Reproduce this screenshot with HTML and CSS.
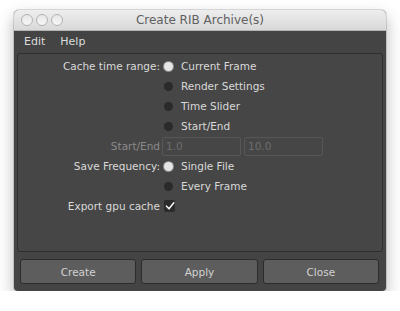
FILE: index.html
```html
<!DOCTYPE html>
<html lang="en">
<head>
  <meta charset="UTF-8" />
  <title>Create RIB Archive(s)</title>
  <link rel="stylesheet" href="styles.css">
</head>
<body>
  <div class="window">
    <div class="titlebar">
      <div class="lights">
        <span class="light"></span>
        <span class="light"></span>
        <span class="light"></span>
      </div>
      <div class="title">Create RIB Archive(s)</div>
    </div>

    <div class="menubar">
      <span class="menu-item">Edit</span>
      <span class="menu-item">Help</span>
    </div>

    <div class="panel">
      <div class="row">
        <span class="label">Cache time range:</span>
        <label class="radio"><span class="dot on"></span>Current Frame</label>
      </div>
      <div class="row">
        <span class="label"></span>
        <label class="radio"><span class="dot"></span>Render Settings</label>
      </div>
      <div class="row">
        <span class="label"></span>
        <label class="radio"><span class="dot"></span>Time Slider</label>
      </div>
      <div class="row">
        <span class="label"></span>
        <label class="radio"><span class="dot"></span>Start/End</label>
      </div>
      <div class="row">
        <span class="label disabled">Start/End</span>
        <div class="fields">
          <input class="field" type="text" value="1.0" disabled />
          <input class="field" type="text" value="10.0" disabled />
        </div>
      </div>
      <div class="row">
        <span class="label">Save Frequency:</span>
        <label class="radio"><span class="dot on"></span>Single File</label>
      </div>
      <div class="row">
        <span class="label"></span>
        <label class="radio"><span class="dot"></span>Every Frame</label>
      </div>
      <div class="row">
        <span class="label">Export gpu cache</span>
        <span class="checkbox">
          <svg width="10" height="10" viewBox="0 0 10 10"><path d="M1.5 5.2 L4 7.8 L8.8 1.8" fill="none" stroke="#f2f2f2" stroke-width="1.6" stroke-linecap="round" stroke-linejoin="round"/></svg>
        </span>
      </div>
    </div>

    <div class="buttons">
      <button class="btn">Create</button>
      <button class="btn">Apply</button>
      <button class="btn">Close</button>
    </div>
  </div>
</body>
</html>
```

FILE: styles.css
```css
* {
  margin: 0;
  padding: 0;
  box-sizing: border-box;
}

body {
  background-color: #ffffff;
  font-family: 'DejaVu Sans', sans-serif;
  font-size: 10.5px;
}

.window {
  margin: 10px 0 0 14px;
  width: 372px;
  height: 281px;
  background-color: #444444;
  border-radius: 5px 5px 4px 4px;
  box-shadow: 0 7px 16px rgba(0, 0, 0, 0.3), 0 0 0 1px rgba(0, 0, 0, 0.12);
  display: flex;
  flex-direction: column;
}

.titlebar {
  height: 21px;
  background: linear-gradient(#eeeeee, #d8d8d8);
  border-radius: 5px 5px 0 0;
  border-bottom: 1px solid #b4b4b4;
  display: flex;
  align-items: center;
  position: relative;
}

.lights {
  display: flex;
  gap: 3px;
  padding-left: 7px;
}

.light {
  width: 12px;
  height: 12px;
  border-radius: 50%;
  border: 1px solid #b3b3b3;
  background: linear-gradient(#e6e6e6, #f7f7f7);
}

.title {
  position: absolute;
  left: 0;
  right: 0;
  text-align: center;
  font-size: 12px;
  color: #606060;
}

.menubar {
  height: 21px;
  display: flex;
  align-items: center;
  gap: 15px;
  padding-left: 10px;
  color: #dcdcdc;
  font-size: 11px;
}

.panel {
  margin: 1px 3px 0;
  height: 199px;
  border: 1px solid #2e2e2e;
  border-radius: 3px;
  background-color: #464646;
  padding-top: 2px;
  display: flex;
  flex-direction: column;
}

.row {
  height: 20px;
  display: grid;
  grid-template-columns: 142px auto;
  column-gap: 4px;
  align-items: center;
  color: #d9d9d9;
}

.label {
  text-align: right;
  white-space: nowrap;
}

.label.disabled {
  color: #8a8a8a;
}

.radio {
  display: flex;
  align-items: center;
  gap: 8px;
}

.dot {
  width: 9px;
  height: 9px;
  border-radius: 50%;
  background-color: #2a2a2a;
}

.dot.on {
  background-color: #e6e6e6;
  box-shadow: 0 0 0 1px #8c8c8c;
}

.fields {
  display: flex;
  gap: 3px;
  margin-left: -2px;
}

.field {
  width: 79px;
  height: 19px;
  border: 1px solid #575757;
  border-radius: 2px;
  background-color: #464646;
  color: #6e6e6e;
  font-family: 'DejaVu Sans', sans-serif;
  font-size: 10.5px;
  padding-left: 3px;
  outline: none;
}

.checkbox {
  width: 11px;
  height: 12px;
  background-color: #2b2b2b;
  border-radius: 2px;
  display: flex;
  align-items: center;
  justify-content: center;
}

.buttons {
  display: flex;
  gap: 5px;
  padding: 0 7px 0 6px;
  margin-top: 7px;
}

.btn {
  flex: 1;
  height: 25px;
  background-color: #5d5d5d;
  border: 1px solid #2c2c2c;
  border-radius: 3px;
  color: #d2d2d2;
  font-family: 'DejaVu Sans', sans-serif;
  font-size: 10.5px;
}
```
